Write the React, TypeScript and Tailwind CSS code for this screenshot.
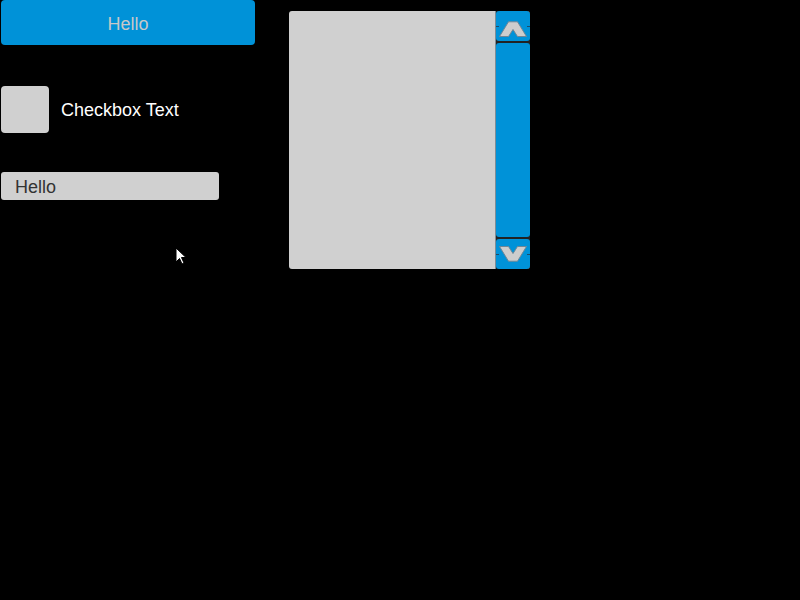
import { useState } from 'react'

function Chevron({ down = false }: { down?: boolean }) {
  return (
    <svg
      width="28"
      height="16"
      viewBox="0 0 28 16"
      className={down ? 'rotate-180' : 'translate-y-[3px]'}
    >
      <path
        d="M0.5 15.5 L9.5 0.8 L18.5 0.8 L27.5 15.5 L18.5 15.5 L14 8.5 L9.5 15.5 Z"
        fill="#cdcdcd"
        stroke="#6f8796"
        strokeWidth="1"
        strokeLinejoin="round"
      />
    </svg>
  )
}

function ScrollButton({ down = false }: { down?: boolean }) {
  return (
    <div className="relative flex h-[30px] items-center justify-center rounded-[3px] bg-[#0092d8]">
      <Chevron down={down} />
      <span className="absolute left-0 top-1/2 h-px w-[3px] bg-[#1d4a66]" />
      <span className="absolute right-0 top-1/2 h-px w-[3px] bg-[#1d4a66]" />
    </div>
  )
}

function ListBox() {
  return (
    <div className="flex h-[258px] w-[241px] overflow-hidden rounded-[3px] bg-[#d0d0d0]">
      <div className="flex-1" />
      <div className="flex w-[35px] flex-col gap-[2px] border-l border-[#7c8c96] bg-[#222]">
        <ScrollButton />
        <div className="flex-1 rounded-[3px] bg-[#0092d8]" />
        <ScrollButton down />
      </div>
    </div>
  )
}

export default function App() {
  const [checked, setChecked] = useState(false)
  const [text, setText] = useState('Hello')

  return (
    <div className="relative h-[600px] w-[800px] bg-black font-['Liberation_Sans',Arial,sans-serif]">
      <div className="flex">
        <div className="ml-[1px] flex w-[254px] flex-col">
          <button className="h-[45px] w-full rounded-[4px] bg-[#0092d8] pt-[3px] text-[18px] text-[#c8c8c8]">
            Hello
          </button>
          <label className="mt-[41px] flex items-center gap-[12px]">
            <span
              onClick={() => setChecked(!checked)}
              className="h-[47px] w-[48px] rounded-[4px] bg-[#d0d0d0]"
            />
            <span className="pt-[2px] text-[18px] text-white">Checkbox Text</span>
          </label>
          <input
            value={text}
            onChange={(e) => setText(e.target.value)}
            className="mt-[39px] h-[28px] w-[218px] rounded-[3px] bg-[#d0d0d0] px-[14px] pt-[2px] text-[18px] text-[#333333] outline-none"
          />
        </div>
        <div className="ml-[34px] mt-[11px]">
          <ListBox />
        </div>
      </div>
      <svg className="absolute left-[175px] top-[247px]" width="12" height="20" viewBox="0 0 12 20">
        <path d="M1 1 L1 15 L4.5 11.5 L7 17 L9 16 L6.5 10.5 L11 10.5 Z" fill="white" stroke="black" strokeWidth="1" />
      </svg>
    </div>
  )
}
